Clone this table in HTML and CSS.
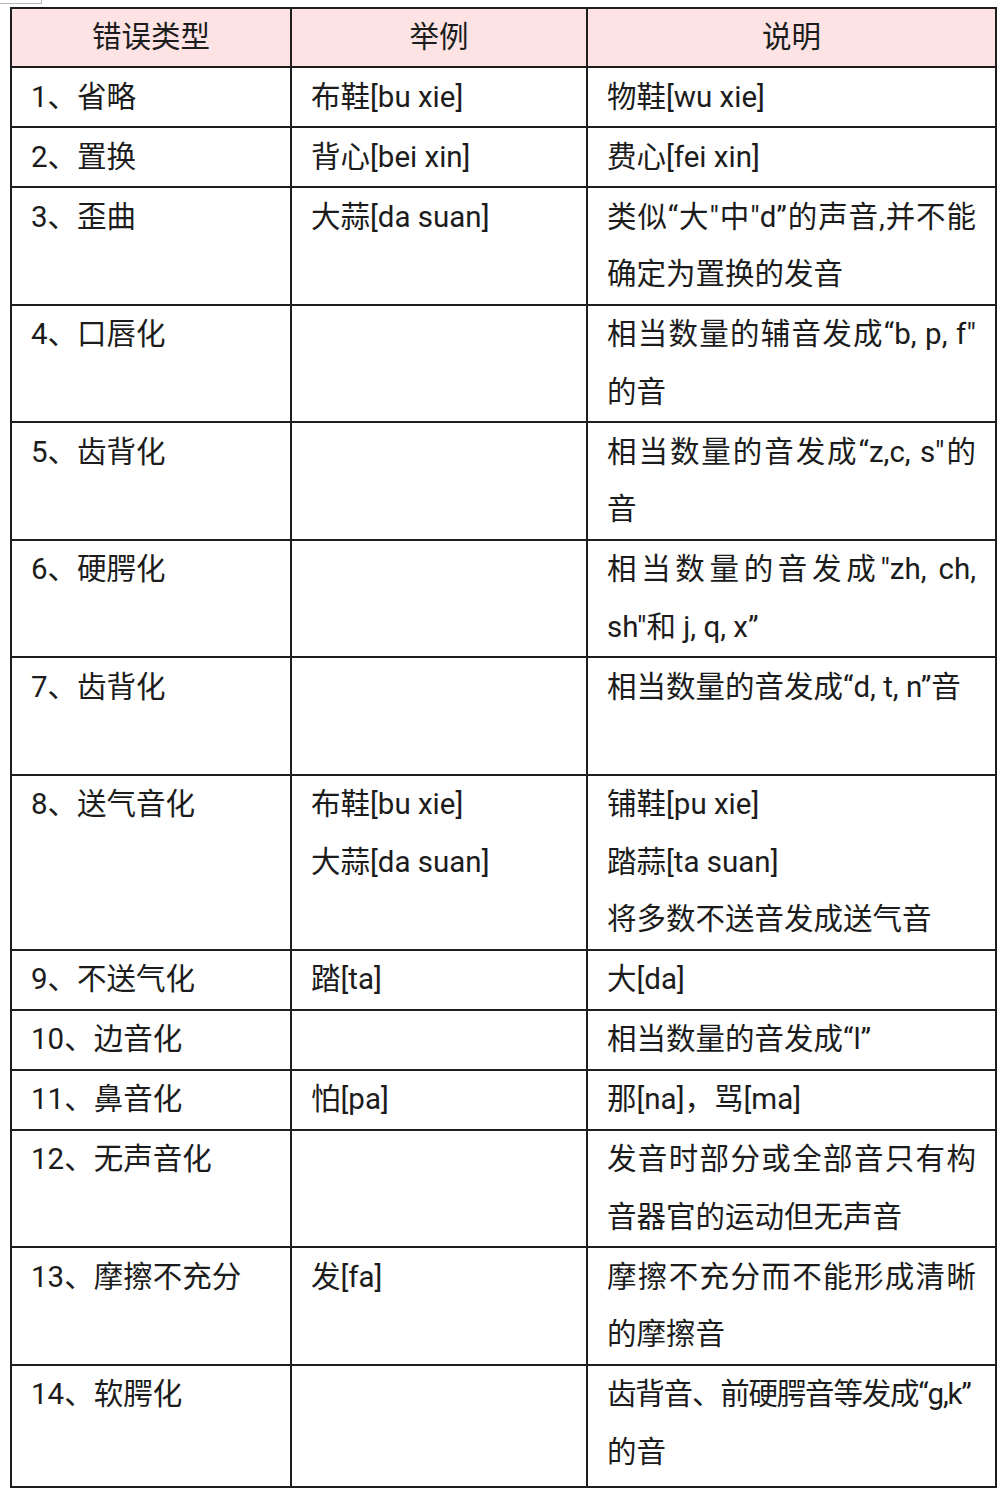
FILE: index.html
```html
<!DOCTYPE html>
<html lang="zh-CN">
<head>
<meta charset="utf-8">
<title>错误类型</title>
<link rel="stylesheet" href="styles.css">
</head>
<body>
<div class="corner"></div>
<table class="err">
  <colgroup><col class="c1"><col class="c2"><col class="c3"></colgroup>
  <thead>
    <tr><th>错误类型</th><th>举例</th><th>说明</th></tr>
  </thead>
  <tbody>
    <tr><td>1、省略</td><td>布鞋[bu xie]</td><td>物鞋[wu xie]</td></tr>
    <tr><td>2、置换</td><td>背心[bei xin]</td><td>费心[fei xin]</td></tr>
    <tr><td>3、歪曲</td><td>大蒜[da suan]</td><td><span class="ln just">类似“大"中"d”的声音,并不能</span><span class="ln">确定为置换的发音</span></td></tr>
    <tr><td>4、口唇化</td><td></td><td><span class="ln just">相当数量的辅音发成“b, p, f"</span><span class="ln">的音</span></td></tr>
    <tr><td>5、齿背化</td><td></td><td><span class="ln just">相当数量的音发成“z,c, s"的</span><span class="ln">音</span></td></tr>
    <tr><td>6、硬腭化</td><td></td><td><span class="ln just">相当数量的音发成"zh, ch,</span><span class="ln">sh"和 j, q, x”</span></td></tr>
    <tr class="two"><td>7、齿背化</td><td></td><td><span class="ln">相当数量的音发成“d, t, n”音</span></td></tr>
    <tr><td>8、送气音化</td><td><span class="ln">布鞋[bu xie]</span><span class="ln">大蒜[da suan]</span></td><td><span class="ln">铺鞋[pu xie]</span><span class="ln">踏蒜[ta suan]</span><span class="ln">将多数不送音发成送气音</span></td></tr>
    <tr><td>9、不送气化</td><td>踏[ta]</td><td>大[da]</td></tr>
    <tr><td>10、边音化</td><td></td><td>相当数量的音发成“l”</td></tr>
    <tr><td>11、鼻音化</td><td>怕[pa]</td><td>那[na]，骂[ma]</td></tr>
    <tr><td>12、无声音化</td><td></td><td><span class="ln just">发音时部分或全部音只有构</span><span class="ln">音器官的运动但无声音</span></td></tr>
    <tr><td>13、摩擦不充分</td><td>发[fa]</td><td><span class="ln just">摩擦不充分而不能形成清晰</span><span class="ln">的摩擦音</span></td></tr>
    <tr class="last"><td>14、软腭化</td><td></td><td><span class="ln tight">齿背音、前硬腭音等发成“g,k”</span><span class="ln">的音</span></td></tr>
  </tbody>
</table>
</body>
</html>
```
FILE: styles.css
```css
html, body {
  margin: 0;
  padding: 0;
  background: #ffffff;
}
body {
  font-family: Roboto, "Noto Sans CJK SC", sans-serif;
  color: #1c1c1c;
}
.corner {
  width: 41px;
  height: 3px;
  border-right: 1px solid #b8b8b8;
  border-bottom: 1px solid #b8b8b8;
}
.err {
  margin: 3px 0 0 10px;
  width: 985px;
  border-collapse: collapse;
  table-layout: fixed;
  font-size: 29.5px;
  line-height: 57.5px;
}
.c1 { width: 280px; }
.c2 { width: 296px; }
.c3 { width: 409px; }
.err th, .err td {
  border: 2px solid #1e1e1e;
  padding: 0.5px 19px 0 19px;
  vertical-align: top;
  text-align: left;
  white-space: nowrap;
}
.err th {
  background: #fde3e3;
  font-weight: 400;
  text-align: center;
  line-height: 57px;
  padding: 0 19px;
}
.ln {
  display: block;
}
.ln.just {
  text-align: justify;
  text-align-last: justify;
}
.ln.tight {
  letter-spacing: -1.2px;
}
.err .two td {
  height: 115px;
}
.err .last td {
  height: 120px;
}
```
